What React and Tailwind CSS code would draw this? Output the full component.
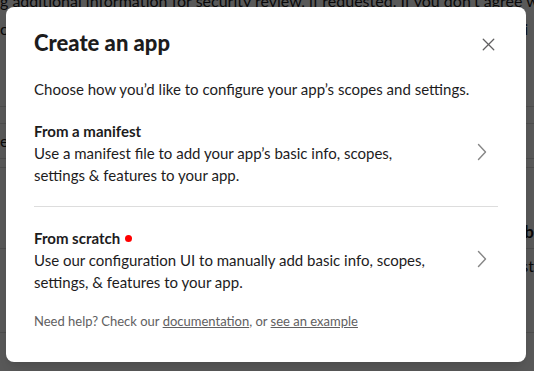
import { X } from 'lucide-react'

function Chevron() {
  return (
    <svg width="12" height="18" viewBox="0 0 12 18" fill="none" stroke="currentColor" strokeWidth="1.4" strokeLinecap="round" strokeLinejoin="round">
      <polyline points="2.5,1.5 9.5,9 2.5,16.5" />
    </svg>
  )
}

function Option({ title, text, dot }) {
  return (
    <button type="button" className="w-full flex items-center text-left py-5">
      <div className="w-[392px]">
        <div className="flex items-center gap-[5px] text-[15px] leading-[22px] font-bold text-[#1d1c1d]">
          {title}
          {dot && <span className="w-[7px] h-[7px] rounded-full bg-[#ff0000] inline-block" />}
        </div>
        <p className="text-[15px] leading-[22px] text-[#1d1c1d]">{text}</p>
      </div>
      <div className="ml-auto mr-[10px] -mt-[2px] text-[#868686]">
        <Chevron />
      </div>
    </button>
  )
}

export default function App() {
  return (
    <div className="relative w-[534px] h-[371px] overflow-hidden bg-white" style={{ fontFamily: 'Lato, "Noto Sans", sans-serif' }}>
      {/* page behind the modal */}
      <div className="text-[16px] text-[#1d1c1d] leading-[26px]">
        <p className="-mt-[12px] whitespace-nowrap">g additional information for security review, if requested. If you don’t agree w</p>
        <p className="whitespace-nowrap mt-[2px]">os<span className="ml-[500px]">vi</span></p>
        <div className="h-[64px]" />
        <div className="border-t border-[#ddd] h-[17px]" />
        <div className="border-t border-[#ddd] h-[35px] text-[16px] leading-[34px]">e</div>
        <div className="border-t border-[#ddd] h-[9px]" />
        <div className="border-t border-[#ddd] h-[81px] flex items-end justify-end text-[17px] font-bold pb-[3px]">b</div>
        <div className="border-t border-[#ddd] h-[84px] flex justify-end text-[16px] pt-[4px]">st</div>
        <div className="border-t border-[#ddd]" />
      </div>

      <div className="absolute inset-0 bg-black/[0.65]" />

      <div className="absolute left-[6px] top-[7px] w-[520px] h-[355px] bg-white rounded-[8px] shadow-lg">
        <div className="flex items-center justify-between pl-7 pr-[28px] pt-[14px] h-[70px] pb-3">
          <h1 className="text-[22px] leading-[30px] font-black text-[#1d1c1d]">Create an app</h1>
          <button type="button" className="text-[#616061] -mr-[1px] mt-[2px]">
            <X size={21} strokeWidth={1.5} />
          </button>
        </div>

        <div className="px-7">
          <p className="text-[15px] leading-[22px] text-[#1d1c1d] pt-[1px]">
            Choose how you’d like to configure your app’s scopes and settings.
          </p>
          <Option
            title="From a manifest"
            text="Use a manifest file to add your app’s basic info, scopes, settings & features to your app."
          />
          <div className="border-t border-[#dddddd]" />
          <Option
            dot
            title="From scratch"
            text="Use our configuration UI to manually add basic info, scopes, settings, & features to your app."
          />
          <p className="text-[13px] leading-[18px] text-[#616061] -mt-[1px]">
            Need help? Check our <a className="underline">documentation</a>, or{' '}
            <a className="underline">see an example</a>
          </p>
        </div>
      </div>
    </div>
  )
}
